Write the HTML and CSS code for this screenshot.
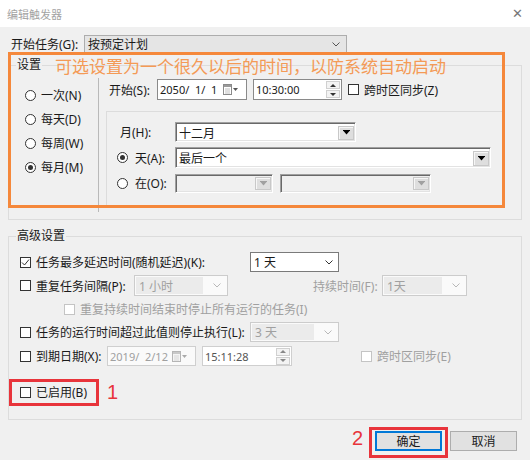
FILE: index.html
```html
<!DOCTYPE html>
<html>
<head>
<meta charset="utf-8" />
<link rel="stylesheet" href="styles.css">
</head>
<body>
<div class="titlebar">
  <span class="title">编辑触发器</span>
  <span class="close">✕</span>
</div>

<div class="dlg">
  <div class="task-row">
    <span class="lbl-task">开始任务(G):</span>
    <div class="combo">按预定计划<svg class="chev" width="8" height="5" viewBox="0 0 8 5"><path d="M0.5 0.5L4 4L7.5 0.5" stroke="#555" fill="none"/></svg></div>
  </div>

  <div class="group settings">
    <div class="legend">设置</div>
    <div class="set-body">
      <div class="freq">
        <div class="opt"><span class="rb"></span>一次(N)</div>
        <div class="opt"><span class="rb"></span>每天(D)</div>
        <div class="opt"><span class="rb"></span>每周(W)</div>
        <div class="opt"><span class="rb on"></span>每月(M)</div>
      </div>
      <div class="detail">
        <div class="start-row">
          <span class="lbl-start">开始(S):</span>
          <div class="datebox"><span class="num-txt">2050/  1/  1</span><svg class="cal" width="16" height="11" viewBox="0 0 16 11"><rect x="0.5" y="0.5" width="8" height="10" fill="#fff" stroke="#8a8a8a"/><rect x="1" y="1" width="7" height="2" fill="#9a9a9a"/><path d="M2 5h5M2 7h5M2 9h5" stroke="#c0c0c0"/><path d="M10 4h5l-2.5 3z" fill="#555"/></svg></div>
          <div class="timebox"><span class="num-txt">10:30:00</span><span class="spin"><span class="up"></span><span class="down"></span></span></div>
          <span class="cb"></span><span class="gap">跨时区同步(Z)</span>
        </div>
        <div class="group inner">
          <div class="mrow m1">
            <span class="lbl-m pad">月(H):</span>
            <div class="csel w1">十二月<span class="dbtn"><svg width="7" height="5" viewBox="0 0 7 5"><path d="M0 0h7v1H0z M0.5 1h6L3.5 4.5z" fill="#000"/></svg></span></div>
          </div>
          <div class="mrow m2">
            <span class="lbl-m"><span class="rb on"></span>天(A):</span>
            <div class="csel w2">最后一个<span class="dbtn"><svg width="7" height="5" viewBox="0 0 7 5"><path d="M0 0h7v1H0z M0.5 1h6L3.5 4.5z" fill="#000"/></svg></span></div>
          </div>
          <div class="mrow m3">
            <span class="lbl-m"><span class="rb"></span>在(O):</span>
            <div class="csel off w3"><span class="dbtn"><svg width="7" height="5" viewBox="0 0 7 5"><path d="M0 0h7v1H0z M0.5 1h6L3.5 4.5z" fill="#a0a0a0"/></svg></span></div>
            <div class="csel off w4"><span class="dbtn"><svg width="7" height="5" viewBox="0 0 7 5"><path d="M0 0h7v1H0z M0.5 1h6L3.5 4.5z" fill="#a0a0a0"/></svg></span></div>
          </div>
        </div>
      </div>
    </div>
  </div>

  <div class="group adv">
    <div class="legend">高级设置</div>
    <div class="arow a1">
      <span class="cb on"><svg width="9" height="9" viewBox="0 0 9 9"><path d="M1 4.5L3.5 7L8 1.5" stroke="#333" fill="none"/></svg></span>
      <span class="lbl-long">任务最多延迟时间(随机延迟)(K):</span>
      <div class="wsel">1 天<svg class="chev" width="8" height="5" viewBox="0 0 8 5"><path d="M0.5 0.5L4 4L7.5 0.5" stroke="#333" fill="none"/></svg></div>
    </div>
    <div class="arow a2">
      <span class="cb"></span>
      <span class="lbl-rep">重复任务间隔(P):</span>
      <div class="dsel w-rep"><span class="dtxt">1 小时</span><svg class="chev" width="8" height="5" viewBox="0 0 8 5"><path d="M0.5 0.5L4 4L7.5 0.5" stroke="#b8b8b8" fill="none"/></svg></div>
      <span class="lbl-dur">持续时间(F):</span>
      <div class="dsel w-dur"><span class="dtxt">1天</span><svg class="chev" width="8" height="5" viewBox="0 0 8 5"><path d="M0.5 0.5L4 4L7.5 0.5" stroke="#b8b8b8" fill="none"/></svg></div>
    </div>
    <div class="arow a3">
      <span class="cb off"></span>
      <span class="muted gap">重复持续时间结束时停止所有运行的任务(I)</span>
    </div>
    <div class="arow a4">
      <span class="cb"></span>
      <span class="lbl-long">任务的运行时间超过此值则停止执行(L):</span>
      <div class="dsel w-stop"><span class="dtxt">3 天</span><svg class="chev" width="8" height="5" viewBox="0 0 8 5"><path d="M0.5 0.5L4 4L7.5 0.5" stroke="#b8b8b8" fill="none"/></svg></div>
    </div>
    <div class="arow a5">
      <span class="cb"></span>
      <span class="lbl-exp">到期日期(X):</span>
      <div class="datebox off"><span class="num-txt">2019/  2/12</span><svg class="cal" width="16" height="11" viewBox="0 0 16 11"><rect x="0.5" y="0.5" width="8" height="10" fill="#f4f4f4" stroke="#b5b5b5"/><rect x="1" y="1" width="7" height="2" fill="#c8c8c8"/><path d="M2 5h5M2 7h5M2 9h5" stroke="#d6d6d6"/><path d="M10 4h5l-2.5 3z" fill="#aaa"/></svg></div>
      <div class="timebox off"><span class="num-txt">15:11:28</span><span class="spin"><span class="up"></span><span class="down"></span></span></div>
      <span class="cb off sync"></span><span class="muted gap">跨时区同步(E)</span>
    </div>
    <div class="arow a6">
      <span class="cb"></span><span class="gap">已启用(B)</span>
    </div>
  </div>

  <div class="buttons">
    <div class="btn ok">确定</div>
    <div class="btn">取消</div>
  </div>
</div>

<div class="mark-orange"></div>
<div class="note">可选设置为一个很久以后的时间，以防系统自动启动</div>
<div class="mark-red m-enable"></div>
<div class="num n1">1</div>
<div class="mark-red m-ok"></div>
<div class="num n2">2</div>
</body>
</html>
```

FILE: styles.css
```css
* {
     box-sizing: border-box;
}
body {
     margin: 0;
     width: 530px;
     height: 460px;
     overflow: hidden;
     position: relative;
     background: #f0f0f0;
     color: #1a1a1a;
     font: 12px "Noto Sans", "Noto Sans CJK SC", sans-serif;
}

.titlebar {
     height: 27px;
     background: #fff;
     display: flex;
     align-items: center;
     justify-content: space-between;
     padding: 0 7px 0 7px;
}
.title {
     color: #a3a3a3;
     font-size: 11px;
}
.close {
     color: #777;
     font: 13px "DejaVu Sans", sans-serif;
     line-height: 13px;
}

.dlg {
     padding: 0 8px;
}

/* top combo */
.task-row {
     display: flex;
     align-items: center;
     margin-top: 8px;
     height: 18px;
}
.lbl-task {
     width: 76px;
     padding-left: 3px;
}
.combo {
     width: 263px;
     height: 18px;
     border: 1px solid #adadad;
     background: #e5e5e5;
     display: flex;
     align-items: center;
     justify-content: space-between;
     padding: 0 6px 0 3px;
}

/* group boxes */
.group {
     border: 1px solid #dcdcdc;
}
.legend {
     margin: -9px 0 0 7px;
     padding: 0 1px;
     width: fit-content;
     line-height: 16px;
     background: #f0f0f0;
}
.settings {
     margin-top: 12px;
}
.set-body {
     display: flex;
     height: 134px;
     margin: 5px 0 7px;
}
.freq {
     width: 90px;
     border-right: 1px solid #b9b9b9;
     padding: 5px 0 0 16px;
}
.opt {
     height: 24px;
     display: flex;
     align-items: center;
     gap: 5px;
}

.rb {
     width: 11px;
     height: 11px;
     border: 1px solid #333;
     border-radius: 50%;
     background: #fff;
     flex: none;
     display: flex;
     align-items: center;
     justify-content: center;
}
.rb.on::after {
     content: "";
     width: 5px;
     height: 5px;
     border-radius: 50%;
     background: #333;
}
.cb {
     width: 11px;
     height: 11px;
     border: 1px solid #333;
     background: #fff;
     flex: none;
     display: flex;
     align-items: center;
     justify-content: center;
}
.cb.off {
     border-color: #c4c4c4;
}
.gap {
     margin-left: 5px;
}
.muted {
     color: #a0a0a0;
}
.num-txt {
     font-size: 11px;
     white-space: pre;
}

.detail {
     flex: 1;
     padding: 1px 18px 0 7px;
}
.start-row {
     display: flex;
     align-items: center;
     height: 21px;
     padding-left: 3px;
}
.lbl-start {
     width: 48px;
}
.datebox {
     width: 90px;
     height: 21px;
     border: 1px solid #8a8a8a;
     background: #fff;
     display: flex;
     align-items: center;
     justify-content: space-between;
     padding: 0 7px 0 2px;
     margin-right: 6px;
}
.datebox.off {
     width: 89px;
     height: 20px;
     border-color: #cfcfcf;
     background: #fafafa;
     color: #a0a0a0;
}
.timebox {
     width: 89px;
     height: 21px;
     border: 1px solid #8a8a8a;
     background: #fff;
     display: flex;
     align-items: center;
     padding: 0 1px 0 2px;
     margin-right: 6px;
}
.timebox.off {
     width: 90px;
     height: 20px;
     border-color: #cfcfcf;
     color: #555;
}
.spin {
     margin-left: auto;
     width: 14px;
     height: 17px;
     display: flex;
     flex-direction: column;
     gap: 1px;
}
.spin span {
     flex: 1;
     border: 1px solid #d0d0d0;
     background: #f3f3f3;
     display: flex;
     align-items: center;
     justify-content: center;
}
.spin .up::after {
     content: "";
     border: 3px solid transparent;
     border-top: 0;
     border-bottom: 3px solid #333;
}
.spin .down::after {
     content: "";
     border: 3px solid transparent;
     border-bottom: 0;
     border-top: 3px solid #333;
}
.off .spin .up::after {
     border-bottom-color: #888;
}
.off .spin .down::after {
     border-top-color: #888;
}

/* monthly box */
.inner {
     margin-top: 11px;
     height: 97px;
     padding-left: 10px;
}
.mrow {
     display: flex;
     align-items: center;
     gap: 7px;
}
.m1 {
     margin-top: 10px;
     height: 20px;
}
.m2 {
     margin-top: 5px;
     height: 21px;
}
.m3 {
     margin-top: 5px;
     height: 20px;
}
.lbl-m {
     width: 58px;
     margin-right: -7px;
     display: flex;
     align-items: center;
     gap: 7px;
}
.lbl-m.pad {
     padding-left: 3px;
}
.csel {
     height: 100%;
     display: flex;
     align-items: center;
     background: #fff;
     border: 1px solid;
     border-color: #a0a0a0 #fff #fff #a0a0a0;
     box-shadow: inset 1px 1px 0 #696969, inset -1px -1px 0 #e3e3e3;
     padding: 1px 1px 0 3px;
}
.csel.off {
     background: #f0f0f0;
     height: 19px;
}
.w1 {
     width: 181px;
}
.w2 {
     width: 316px;
}
.w3 {
     width: 98px;
}
.w4 {
     width: 151px;
}
.dbtn {
     margin-left: auto;
     width: 16px;
     height: calc(100% - 3px);
     background: #dedede;
     border: 1px solid #c8c8c8;
     box-shadow: inset 1px 1px 0 #f6f6f6;
     display: flex;
     align-items: center;
     justify-content: center;
}

/* advanced */
.adv {
     margin-top: 16px;
     height: 184px;
}
.arow {
     display: flex;
     align-items: center;
     padding-left: 11px;
}
.a1 {
     margin-top: 8px;
     height: 20px;
}
.a2 {
     margin-top: 3px;
     height: 21px;
}
.a3 {
     margin-top: 6px;
     height: 14px;
     padding-left: 55px;
}
.a4 {
     margin-top: 6px;
     height: 20px;
}
.a5 {
     margin-top: 4px;
     height: 20px;
}
.a6 {
     margin-top: 16px;
     height: 20px;
}
.lbl-long {
     width: 219px;
     padding-left: 5px;
}
.lbl-rep {
     width: 103px;
     padding-left: 5px;
}
.lbl-dur {
     width: 69px;
     margin-left: 85px;
     color: #a0a0a0;
}
.lbl-exp {
     width: 76px;
     padding-left: 5px;
}
.cb.sync {
     margin-left: 63px;
}
.wsel {
     width: 89px;
     height: 20px;
     border: 1px solid #7a7a7a;
     background: #fff;
     display: flex;
     align-items: center;
     justify-content: space-between;
     padding: 0 5px 0 3px;
}
.dsel {
     height: 100%;
     border: 1px solid #cccccc;
     background: #fafafa;
     display: flex;
     align-items: center;
     justify-content: space-between;
     padding: 1px 6px 1px 1px;
     color: #a0a0a0;
}
.dtxt {
     height: 100%;
     flex: 1;
     margin-right: 10px;
     background: #ebebeb;
     padding-left: 3px;
     display: flex;
     align-items: center;
}
.w-rep {
     width: 94px;
}
.w-dur {
     width: 85px;
}
.w-stop {
     width: 89px;
}

/* buttons */
.buttons {
     display: flex;
     justify-content: flex-end;
     gap: 8px;
     margin: 11px 5px 0 0;
}
.btn {
     width: 67px;
     height: 20px;
     border: 1px solid #adadad;
     background: #e1e1e1;
     display: flex;
     align-items: center;
     justify-content: center;
}
.btn.ok {
     border-color: #0078d7;
     box-shadow: inset 0 0 0 1px #0078d7;
}

/* annotations over the dialog */
.mark-orange {
     position: absolute;
     left: 8px;
     top: 52px;
     width: 497px;
     height: 156px;
     border: 3px solid #f5883b;
}
.note {
     position: absolute;
     left: 55px;
     top: 57px;
     font-size: 17px;
     line-height: 18px;
     color: #f49a56;
     font-family: "Noto Sans CJK SC", sans-serif;
}
.mark-red {
     position: absolute;
     border: 3px solid #e8343b;
}
.m-enable {
     left: 9px;
     top: 379px;
     width: 90px;
     height: 27px;
}
.m-ok {
     left: 369px;
     top: 427px;
     width: 79px;
     height: 31px;
}
.num {
     position: absolute;
     color: #e8343b;
     font: 20px "Liberation Sans", sans-serif;
     line-height: 20px;
}
.n1 {
     left: 107px;
     top: 382px;
}
.n2 {
     left: 352px;
     top: 428px;
}
```
